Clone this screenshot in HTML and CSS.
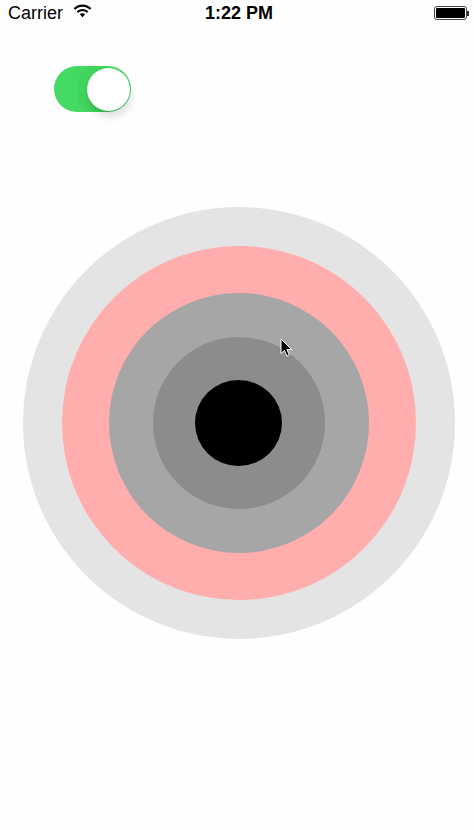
FILE: index.html
```html
<!DOCTYPE html>
<html lang="en">

<head>
    <meta charset="UTF-8">
    <meta name="viewport" content="width=device-width, initial-scale=1.0">
    <title>Switch and rings</title>
    <link rel="stylesheet" href="styles.css">
</head>

<body>
    <div class="screen">
        <div class="status-bar">
            <div class="status-left">
                <span>Carrier</span>
                <svg class="wifi" width="19" height="14" viewBox="0 0 19 14">
                    <path d="M9.5 0.5C6 0.5 2.9 1.9 0.6 4.2L2.2 5.8C4.1 3.9 6.7 2.8 9.5 2.8s5.4 1.1 7.3 3L18.4 4.2C16.1 1.9 13 0.5 9.5 0.5z"/>
                    <path d="M9.5 4.9C7.2 4.9 5.2 5.8 3.7 7.3L5.3 8.9C6.4 7.8 7.9 7.1 9.5 7.1s3.1 .7 4.2 1.8L15.3 7.3C13.8 5.8 11.8 4.9 9.5 4.9z"/>
                    <path d="M9.5 9.2C8.4 9.2 7.5 9.6 6.8 10.3L9.5 13.2L12.2 10.3C11.5 9.6 10.6 9.2 9.5 9.2z"/>
                </svg>
            </div>
            <div class="status-time">1:22 PM</div>
            <div class="status-right">
                <div class="battery"><div class="battery-fill"></div></div>
                <div class="battery-tip"></div>
            </div>
        </div>

        <div class="toggle">
            <div class="toggle-knob"></div>
        </div>

        <div class="rings">
            <div class="ring ring-grey">
                <div class="ring ring-pink">
                    <div class="ring ring-mid">
                        <div class="ring ring-dark">
                            <div class="ring ring-black"></div>
                        </div>
                    </div>
                </div>
            </div>
        </div>

        <svg class="cursor" width="13" height="20" viewBox="0 0 13 20">
            <path d="M1 1V15.5L4.4 12.4L6.8 18L9.3 16.9L7 11.5H11.6z" fill="#000" stroke="#fff" stroke-width="1"/>
        </svg>
    </div>
</body>

</html>
```

FILE: styles.css
```css
body {
    margin: 0;
    padding: 0;
    background: #fefefe;
    font-family: 'Liberation Sans', Arial, sans-serif;
    color: #000;
}

.screen {
    position: relative;
    width: 474px;
    height: 830px;
    overflow: hidden;
}

.status-bar {
    display: grid;
    grid-template-columns: 1fr auto 1fr;
    align-items: center;
    height: 26px;
    padding: 0 5px 0 8px;
    font-size: 18px;
}

.status-left {
    display: flex;
    align-items: center;
    gap: 10px;
}

.wifi {
    margin-top: -5px;
}

.status-time {
    margin-left: 1px;
    font-weight: bold;
}

.status-right {
    display: flex;
    align-items: center;
    justify-content: flex-end;
}

.battery {
    width: 33px;
    height: 14px;
    padding: 1px;
    border: 1px solid #444;
    border-radius: 3px;
    box-sizing: border-box;
}

.battery-fill {
    height: 100%;
    background: #000;
    border-radius: 1px;
}

.battery-tip {
    width: 2px;
    height: 5px;
    background: #333;
}

.toggle {
    display: flex;
    align-items: center;
    justify-content: flex-end;
    width: 77px;
    height: 46px;
    margin: 40px 0 0 54px;
    padding-right: 1.5px;
    box-sizing: border-box;
    border-radius: 23px;
    background: radial-gradient(circle 31px at 54px 23px, #40d35d 100%, #44d962 100%);
}

.toggle-knob {
    width: 43px;
    height: 43px;
    background: #fff;
    border-radius: 50%;
    box-shadow: 2px 7px 7px rgba(0, 0, 0, 0.1), 0 1px 2px rgba(0, 0, 0, 0.14);
}

.rings {
    display: flex;
    margin: 95px 0 0 23px;
}

.ring {
    display: flex;
    flex-shrink: 0;
    align-items: center;
    justify-content: center;
    border-radius: 50%;
}

.ring-grey {
    width: 432px;
    height: 432px;
    background: #e4e4e4;
}

.ring-pink {
    width: 354px;
    height: 354px;
    background: #ffadad;
}

.ring-mid {
    width: 260px;
    height: 260px;
    background: #a6a6a6;
}

.ring-dark {
    width: 172px;
    height: 172px;
    background: #8c8c8c;
}

.ring-black {
    width: 87px;
    height: 86px;
    margin-right: 1px;
    background: #000;
}

.cursor {
    position: absolute;
    left: 280px;
    top: 338px;
}
```
